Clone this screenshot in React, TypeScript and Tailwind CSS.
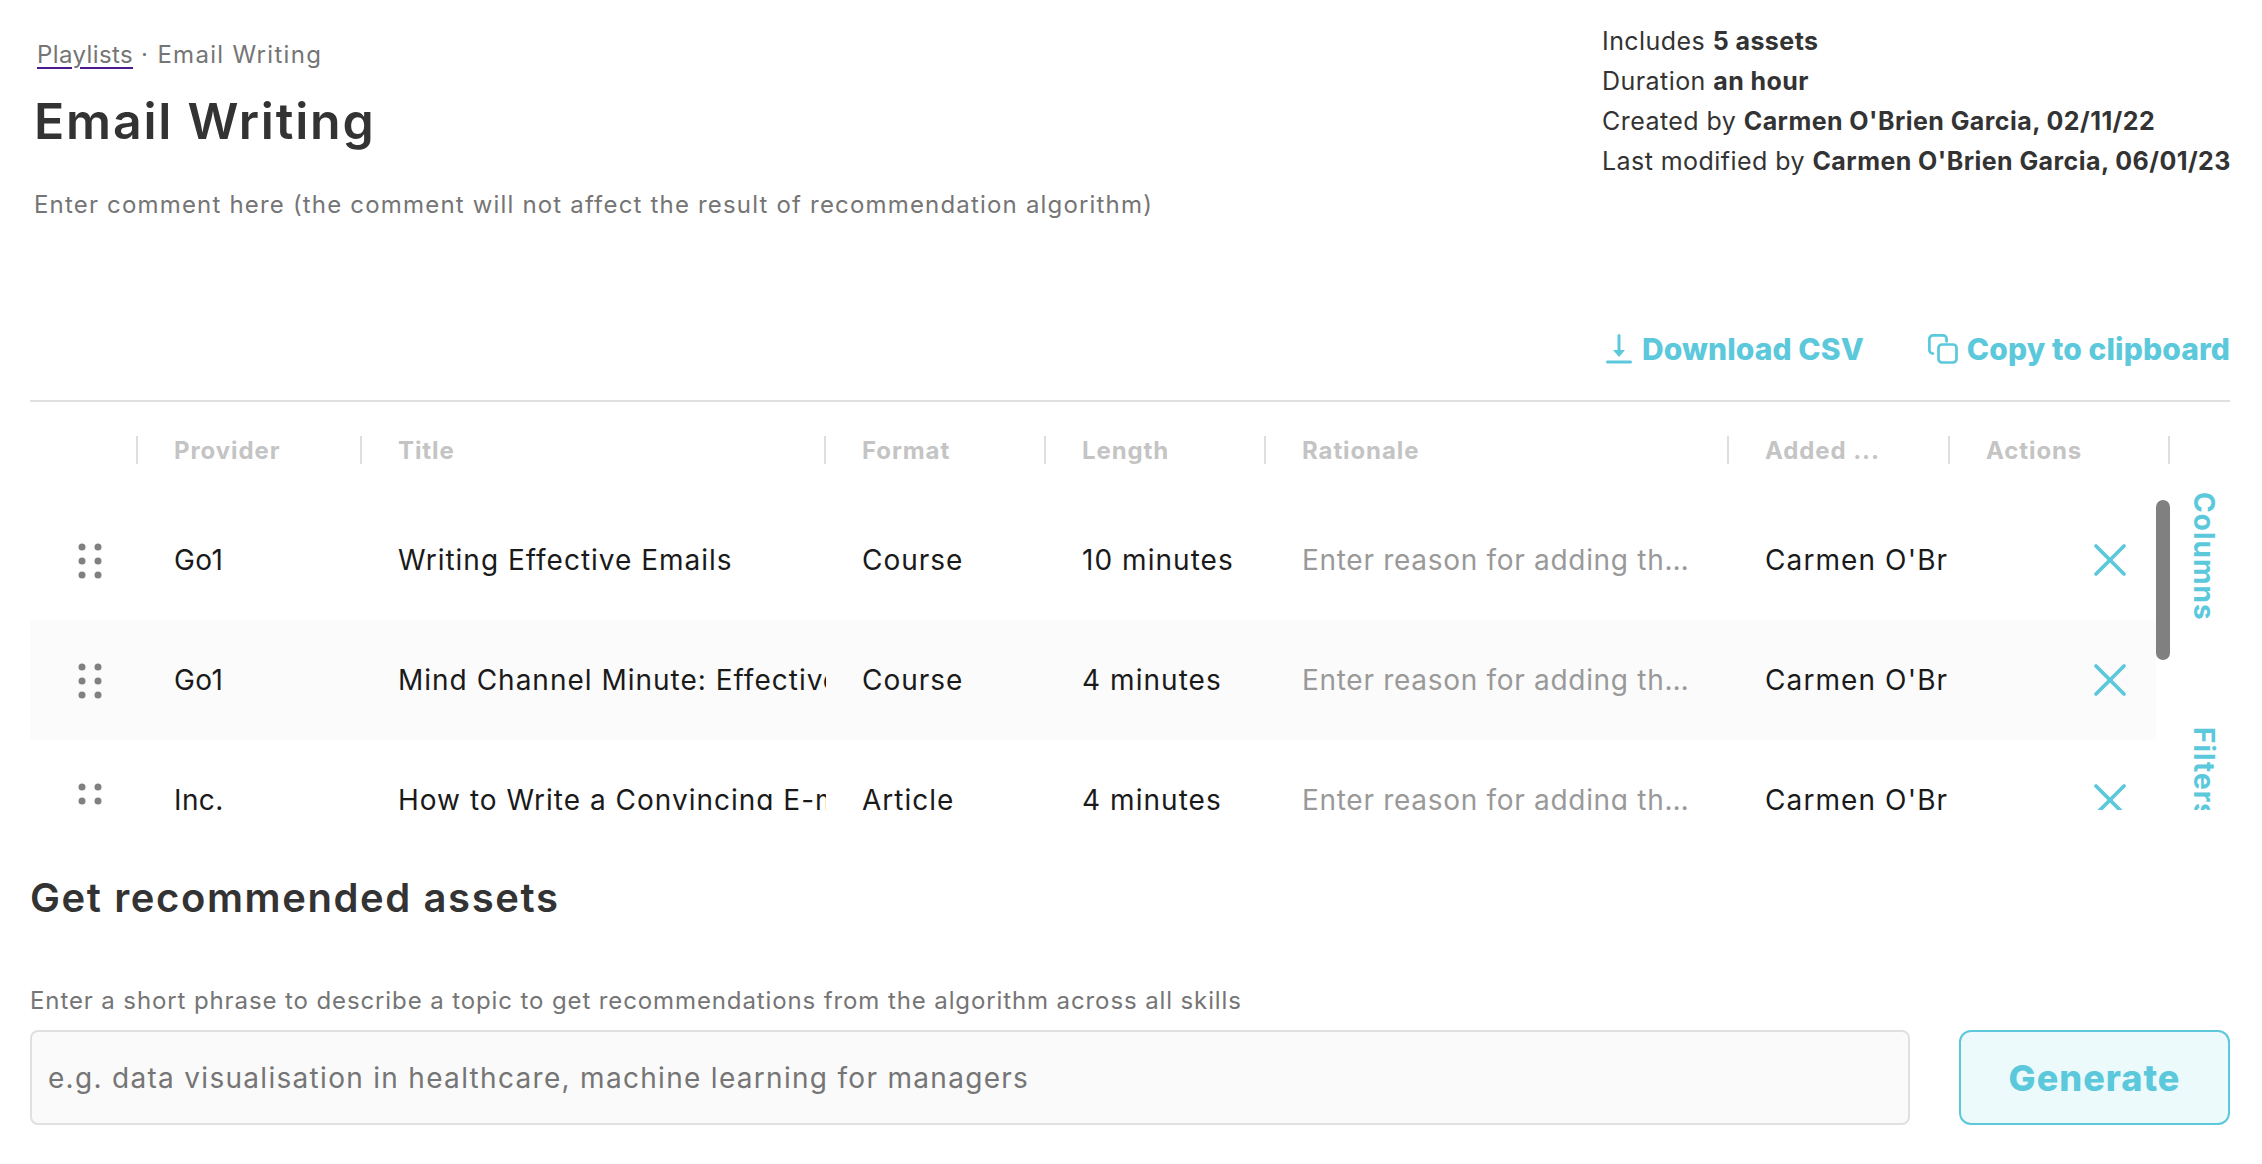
import { X } from "lucide-react"

const HEAD_COLS = "grid-cols-[108px_224px_464px_220px_220px_463px_221px_220px]"
const ROW_COLS = "grid-cols-[108px_224px_464px_220px_220px_463px_221px_206px]"

const rows = [
    { provider: "Go1", title: "Writing Effective Emails", format: "Course", length: "10 minutes", striped: false },
    { provider: "Go1", title: "Mind Channel Minute: Effective Email Writing", format: "Course", length: "4 minutes", striped: true },
    { provider: "Inc.", title: "How to Write a Convincing E-mail", format: "Article", length: "4 minutes", striped: false },
]

function DragHandle() {
    return (
        <svg width="24" height="36" viewBox="0 0 24 36" fill="#808080">
            <circle cx="4" cy="4" r="3.5" />
            <circle cx="20" cy="4" r="3.5" />
            <circle cx="4" cy="18" r="3.5" />
            <circle cx="20" cy="18" r="3.5" />
            <circle cx="4" cy="32" r="3.5" />
            <circle cx="20" cy="32" r="3.5" />
        </svg>
    )
}

function HeadCell({ label }: { label?: string }) {
    return (
        <div className="h-[28px] flex items-center border-r-2 border-[#dedede] pl-[36px] pt-[2px] text-[24px] leading-[28px] font-bold text-[#c4c4c4] tracking-[0.9px] overflow-hidden whitespace-nowrap">
            {label}
        </div>
    )
}

export default function App() {
    return (
        <div className="w-[2262px] h-[1164px] overflow-hidden bg-white font-['Inter',sans-serif]">
            <div className="flex justify-between pl-[34px] pr-[32px] h-[314px]">
                <div className="pt-[39px]">
                    <div className="pl-[3px] text-[24px] leading-[32px] text-[#757575] tracking-[1.3px]">
                        <a className="underline decoration-[#4b1a8c] decoration-2 underline-offset-[4px] tracking-[0.4px]">Playlists</a> · Email Writing
                    </div>
                    <h1 className="mt-[21px] text-[50px] leading-[58px] font-semibold text-[#333333] tracking-[1.8px]">Email Writing</h1>
                    <p className="mt-[39px] text-[24px] leading-[32px] text-[#757575] tracking-[1.18px]">
                        Enter comment here (the comment will not affect the result of recommendation algorithm)
                    </p>
                </div>
                <div className="pt-[21px] w-[628px] text-[25px] leading-[40px] text-[#333333] tracking-[0.44px] whitespace-nowrap">
                    <div>Includes <b className="font-bold">5 assets</b></div>
                    <div>Duration <b className="font-bold">an hour</b></div>
                    <div>Created by <b className="font-bold">Carmen O'Brien Garcia, 02/11/22</b></div>
                    <div>Last modified by <b className="font-bold">Carmen O'Brien Garcia, 06/01/23</b></div>
                </div>
            </div>

            <div className="flex justify-end items-center gap-[64px] pr-[32px] h-[70px] mb-[16px] text-[30px] leading-[40px] font-extrabold text-[#5bc8db] tracking-[0.1px]">
                <div className="flex items-center gap-[10px]">
                    <svg width="26" height="30" viewBox="0 0 26 30" fill="none" stroke="#5bc8db" strokeLinecap="round">
                        <path d="M13 1.5v16" strokeWidth="3" />
                        <path d="M7 16h12l-6 7z" fill="#5bc8db" strokeWidth="0" />
                        <path d="M1.5 28h23" strokeWidth="3" />
                    </svg>
                    <span>Download CSV</span>
                </div>
                <div className="flex items-center gap-[9px]">
                    <svg width="30" height="30" viewBox="0 0 30 30" fill="none" stroke="#5bc8db" strokeWidth="2.7">
                        <rect x="10.5" y="10.5" width="18" height="18" rx="3.5" />
                        <path d="M5 19.5A3.5 3.5 0 0 1 1.4 16V5A3.6 3.6 0 0 1 5 1.4h10A3.6 3.6 0 0 1 18.6 5v2.5" strokeLinecap="round" />
                    </svg>
                    <span>Copy to clipboard</span>
                </div>
            </div>

            <div className="ml-[30px] mr-[32px] h-[2px] bg-[#e0e0e0]" />

            <div className={`ml-[30px] mt-[34px] grid ${HEAD_COLS}`}>
                <HeadCell />
                <HeadCell label="Provider" />
                <HeadCell label="Title" />
                <HeadCell label="Format" />
                <HeadCell label="Length" />
                <HeadCell label="Rationale" />
                <HeadCell label="Added ..." />
                <HeadCell label="Actions" />
            </div>

            <div className="mt-[36px] ml-[30px] h-[310px] flex">
                <div className="w-[2126px] shrink-0 overflow-hidden">
                    {rows.map((row, i) => (
                        <div key={i} className={`grid ${ROW_COLS} h-[120px] items-start text-[28px] leading-[120px] text-[#1a1a1a] whitespace-nowrap ${row.striped ? "bg-[#fbfbfb]" : ""}`}>
                            <div className="flex h-[120px] pt-[43px] pl-[48px]">
                                <DragHandle />
                            </div>
                            <div className="pl-[36px] overflow-hidden tracking-[0.4px]">{row.provider}</div>
                            <div className="pl-[36px] overflow-hidden tracking-[1px]">{row.title}</div>
                            <div className="pl-[36px] overflow-hidden tracking-[1px]">{row.format}</div>
                            <div className="pl-[36px] overflow-hidden tracking-[1.05px]">{row.length}</div>
                            <div className="pl-[36px] pr-[38px] truncate text-[#999999] tracking-[0.7px]">Enter reason for adding this asset</div>
                            <div className="pl-[36px] pr-[3px] overflow-hidden tracking-[1.1px]">
                                <div className="overflow-hidden">Carmen O'Brien Garcia</div>
                            </div>
                            <div className="flex justify-end items-center h-[120px] pr-[18px]">
                                <X size={56} strokeWidth={1.6} color="#5bc8db" />
                            </div>
                        </div>
                    ))}
                </div>
                <div className="w-[14px] shrink-0 h-[160px] rounded-[7px] bg-[#808080]" />
                <div className="w-[62px] shrink-0 -mt-[8px] h-[318px] overflow-hidden pl-[20px] flex flex-col items-start gap-[106px] text-[28px] leading-[28px] font-bold text-[#5bc8db]">
                    <span className="block tracking-[1px] [writing-mode:vertical-rl]">Columns</span>
                    <span className="block tracking-[1px] [writing-mode:vertical-rl]">Filters</span>
                </div>
            </div>

            <h2 className="ml-[30px] mt-[64px] text-[40px] leading-[48px] font-semibold text-[#333333] tracking-[1.6px]">Get recommended assets</h2>
            <label className="block ml-[30px] mt-[64px] text-[24px] leading-[30px] text-[#757575] tracking-[0.89px]">
                Enter a short phrase to describe a topic to get recommendations from the algorithm across all skills
            </label>
            <div className="mt-[14px] ml-[30px] mr-[32px] flex gap-[49px]">
                <div className="flex-1 h-[95px] flex items-center px-[16px] rounded-[8px] border-2 border-[#e0e0e0] bg-[#fafafa] text-[28px] text-[#757575] tracking-[1.3px]">
                    e.g. data visualisation in healthcare, machine learning for managers
                </div>
                <button className="w-[271px] h-[95px] rounded-[12px] border-2 border-[#5bc8db] bg-[#ecfafb] text-[36px] font-extrabold text-[#5bc8db] tracking-[1px]">
                    Generate
                </button>
            </div>
        </div>
    )
}
